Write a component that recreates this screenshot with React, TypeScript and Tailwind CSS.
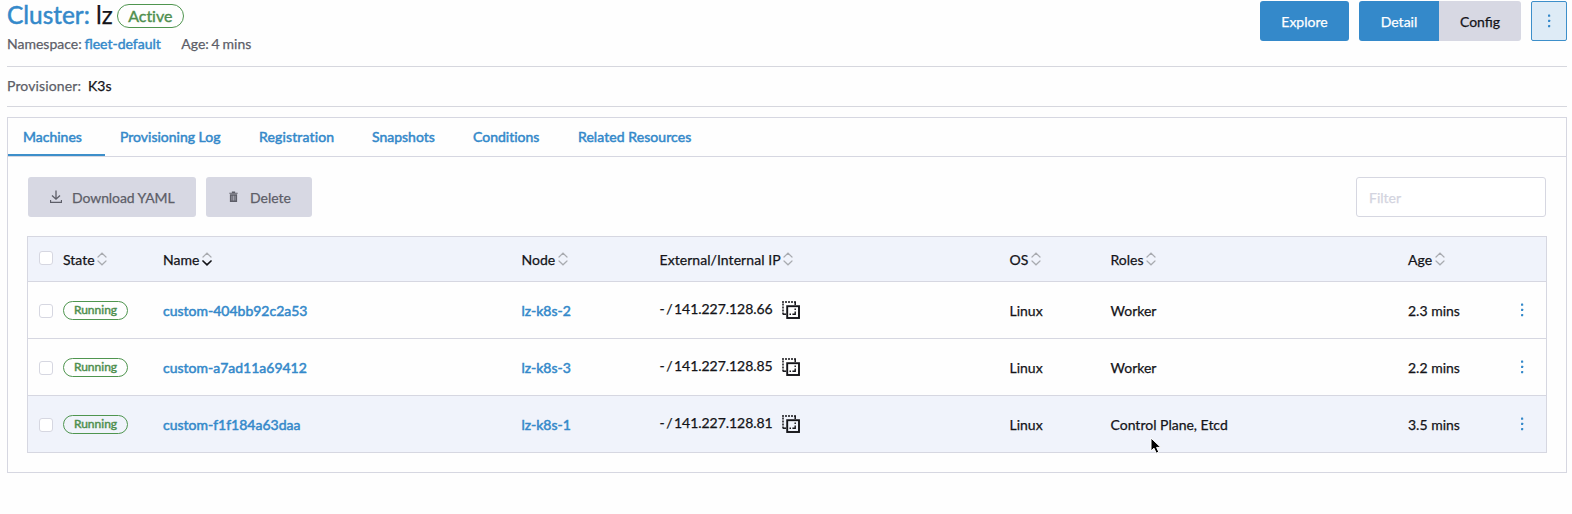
import React from "react";

const COLS = "grid grid-cols-[35px_100px_358.5px_138px_350px_101px_297.5px_1fr]";

const tabs = [
  { label: "Machines", cell: "w-[97px]" },
  { label: "Provisioning Log", cell: "w-[139px]" },
  { label: "Registration", cell: "w-[113px] tracking-[0.15px]" },
  { label: "Snapshots", cell: "w-[101px]" },
  { label: "Conditions", cell: "w-[105px]" },
  { label: "Related Resources", cell: "w-[150px] tracking-[0.08px]" },
];

const machines = [
  { name: "custom-404bb92c2a53", node: "lz-k8s-2", ip: "141.227.128.66", roles: "Worker", age: "2.3 mins" },
  { name: "custom-a7ad11a69412", node: "lz-k8s-3", ip: "141.227.128.85", roles: "Worker", age: "2.2 mins" },
  { name: "custom-f1f184a63daa", node: "lz-k8s-1", ip: "141.227.128.81", roles: "Control Plane, Etcd", age: "3.5 mins", hovered: true },
];

function Dots() {
  return (
    <svg width="4" height="14" viewBox="0 0 4 14" fill="#3489ca">
      <rect x="1" y="0.6" width="2.2" height="2.2" rx="0.4" />
      <rect x="1" y="5.8" width="2.2" height="2.2" rx="0.4" />
      <rect x="1" y="11" width="2.2" height="2.2" rx="0.4" />
    </svg>
  );
}

function SortIcon({ active = false }: { active?: boolean }) {
  return (
    <svg className="ml-[2.5px] mt-[-3px] shrink-0" width="10" height="14" viewBox="0 0 10 14" fill="none" strokeLinecap="round">
      <path d="M1 5 5 1.2 9 5" stroke="#a9abb0" strokeWidth="1.2" />
      <path d="M1 9 5 12.8 9 9" stroke={active ? "#141419" : "#a9abb0"} strokeWidth={active ? 1.7 : 1.2} />
    </svg>
  );
}

function CopyIcon() {
  return (
    <svg width="18" height="18" viewBox="0 0 18 18" fill="none" stroke="#141419">
      <path d="M0 1H14" strokeWidth="1.5" strokeDasharray="2 1" />
      <path d="M13.2 1V4" strokeWidth="1.5" />
      <path d="M1 2.5V14" strokeWidth="1.5" strokeDasharray="2 1" />
      <path d="M1 13.2H4" strokeWidth="1.5" />
      <rect x="5.2" y="5.2" width="11.8" height="11.8" strokeWidth="1.9" />
      <path d="M13.2 7.5V9M13.2 10.4V13.2H10.4M9 13.2H7.5" strokeWidth="1.4" />
    </svg>
  );
}

function Checkbox() {
  return <span className="block size-[14px] rounded-[3px] border border-[#d6d7e1] bg-white" />;
}

function Th({ label, active }: { label: string; active?: boolean }) {
  return (
    <div className="flex items-center whitespace-nowrap pt-[2px]">
      {label}
      <SortIcon active={active} />
    </div>
  );
}

export default function App() {
  return (
    <div className="h-[514px] overflow-hidden bg-[#fefefe] pl-[7px] pr-[5px] font-['Lato',sans-serif] text-[14px] leading-[20px] text-[#141419] [-webkit-text-stroke:0.25px]">
      <header className="flex h-[67px] justify-between border-b border-[#d6d7de]">
        <div>
          <div className="flex h-8 items-center">
            <h1 className="-mt-[2px] whitespace-nowrap text-[24.4px] leading-8">
              <span className="text-[#3489ca] [-webkit-text-stroke:0.5px]">Cluster:</span> lz
            </h1>
            <span className="ml-[4px] flex h-6 w-[67px] items-center justify-center rounded-full border border-[#4f954f] text-[16px] text-[#4f8f4f] [-webkit-text-stroke:0.4px] [font-variant-ligatures:none]">
              Active
            </span>
          </div>
          <div className="mt-[2px] flex gap-[20.5px] whitespace-nowrap text-[#5d5e68] [word-spacing:-0.8px]">
            <span>
              Namespace: <a className="text-[#3489ca] [-webkit-text-stroke:0.45px]">fleet-default</a>
            </span>
            <span>Age: 4 mins</span>
          </div>
        </div>
        <div className="mt-px flex h-10 gap-[10px]">
          <button className="w-[89px] rounded-[3px] bg-[#3489ca] pt-[2px] text-white">Explore</button>
          <div className="flex">
            <button className="w-20 rounded-l-[3px] bg-[#3489ca] pt-[2px] text-white">Detail</button>
            <button className="w-[82px] rounded-r-[3px] bg-[#d7d8e3] pt-[2px]">Config</button>
          </div>
          <button className="flex w-9 items-center justify-center rounded-[2px] border border-[#3d8fca] bg-[#deebf6]">
            <Dots />
          </button>
        </div>
      </header>

      <div className="flex h-10 items-center gap-[7px] border-b border-[#d6d7de] pb-[2px]">
        <span className="w-[74px] tracking-[0.13px] text-[#5d5e68]">Provisioner:</span>
        <span>K3s</span>
      </div>

      <main className="mt-[10px] h-[356px] border border-[#d6d7e1]">
        <nav className="flex h-[39px] border-b border-[#d6d7e1] text-[#3489ca] [-webkit-text-stroke:0.5px] [font-variant-ligatures:none]">
          {tabs.map((t, i) => (
            <a
              key={t.label}
              className={`${t.cell} h-[38px] whitespace-nowrap pl-[15px] pt-[9px] ${i === 0 ? "border-b-2 border-[#3d8fca]" : ""}`}
            >
              {t.label}
            </a>
          ))}
        </nav>

        <div className="flex h-[60px] px-5 pt-5">
          <div className="flex h-10 gap-[10px] text-[#5d5e68]">
            <button className="flex w-[168px] items-center rounded-[3px] bg-[#d7d8e3] pl-[22px]">
              <svg width="12" height="14" viewBox="0 0 12 14" fill="none" stroke="#5d5e68" strokeWidth="1.3">
                <path d="M6 0.5V9M2 5.5 6 9.2 10 5.5M0.5 10V12.4H11.5V10" />
              </svg>
              <span className="ml-[10px] pt-[2px] tracking-[-0.08px]">Download YAML</span>
            </button>
            <button className="flex w-[106px] items-center rounded-[3px] bg-[#d7d8e3] pl-[23px]">
              <svg width="9" height="12" viewBox="0 0 10 12" fill="#5d5e68">
                <path d="M3.2 0H6.8V1.2H9.6V2.4H0.4V1.2H3.2Z" />
                <path fillRule="evenodd" d="M1 3H9V11.5H1ZM3 4.5V9.8H3.6V4.5ZM4.7 4.5V9.8H5.3V4.5ZM6.4 4.5V9.8H7V4.5Z" />
              </svg>
              <span className="ml-[12px] pt-[2px]">Delete</span>
            </button>
          </div>
          <input
            placeholder="Filter"
            className="ml-auto h-10 w-[190px] rounded-[3px] border border-[#d6d7e1] bg-white pl-3 pt-px placeholder:text-[#d3d4e0]"
          />
        </div>

        <section className="ml-[19px] mr-[19px] mt-[19px] border border-[#d6d7e1]">
          <div className={`${COLS} h-[45px] items-center border-b border-[#d6d7e1] bg-[#f0f3fb]`}>
            <div className="-mt-[2px] pl-[11px]">
              <Checkbox />
            </div>
            <Th label="State" />
            <Th label="Name" active />
            <Th label="Node" />
            <div className="tracking-[0.06px]">
              <Th label="External/Internal IP" />
            </div>
            <Th label="OS" />
            <Th label="Roles" />
            <Th label="Age" />
          </div>
          {machines.map((m, i) => (
            <div
              key={m.name}
              className={`${COLS} items-center whitespace-nowrap ${m.hovered ? "bg-[#f0f3fb]" : ""} ${i < 2 ? "h-[57px] border-b border-[#d6d7e1]" : "h-14"}`}
            >
              <div className="pl-[11px] pt-px">
                <Checkbox />
              </div>
              <div>
                <span className="flex h-[19px] w-[65px] items-center justify-center rounded-full border border-[#4f954f] text-[12px] leading-4 text-[#4f8f4f] [-webkit-text-stroke:0.45px]">
                  Running
                </span>
              </div>
              <a className="pt-[2px] text-[#3489ca] [-webkit-text-stroke:0.5px]">{m.name}</a>
              <a className="pt-[2px] text-[#3489ca] [-webkit-text-stroke:0.5px]">{m.node}</a>
              <div className="flex items-center">
                <span className="-mt-[2px] mr-[9px]">
                  <span className="tracking-[-0.4px] [word-spacing:-1.3px]">- / </span>
                  <span className="tracking-[-0.04px]">{m.ip}</span>
                </span>
                <CopyIcon />
              </div>
              <span className="pt-[2px]">Linux</span>
              <span className="relative pt-[2px]">
                {m.roles}
                {m.hovered && (
                  <svg className="absolute left-[39px] top-[24px]" width="12" height="18" viewBox="0 0 12 18">
                    <path d="M1 1V14L4 11.2 6.2 16.2 8.8 15.1 6.6 10.4H10.8Z" fill="#000" stroke="#fff" strokeWidth="1" />
                  </svg>
                )}
              </span>
              <div className="flex items-center justify-between pr-[22px]">
                <span className="pt-[2px]">{m.age}</span>
                <Dots />
              </div>
            </div>
          ))}
        </section>
      </main>
    </div>
  );
}
